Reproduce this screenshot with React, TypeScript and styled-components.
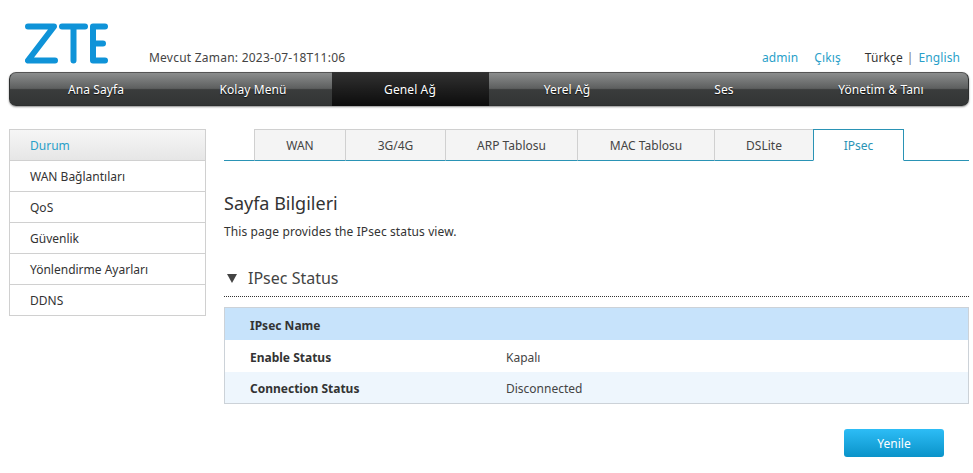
import React from "react";
import styled, { createGlobalStyle } from "styled-components";

const GlobalStyle = createGlobalStyle`
  html, body {
    margin: 0;
    padding: 0;
    background: #fff;
  }
  body {
    font-family: "Noto Sans", "Open Sans", sans-serif;
    font-size: 12px;
    color: #333;
  }
`;

const Page = styled.div`
  width: 973px;
  height: 473px;
  overflow: hidden;
  padding: 0 4px 0 9px;
  box-sizing: border-box;
`;

const Header = styled.header`
  height: 72px;
  display: flex;
  align-items: flex-end;
  padding: 0 9px 0 16px;
`;

const Logo = styled.svg`
  width: 84px;
  height: 41px;
  margin-bottom: 8px;
  flex: none;
`;

const Clock = styled.div`
  margin-left: 40px;
  padding-bottom: 6px;
  font-size: 12px;
  line-height: 17px;
  letter-spacing: 0.23px;
  color: #444;
`;

const UserLinks = styled.div`
  margin-left: auto;
  padding-bottom: 6px;
  display: flex;
  font-size: 12px;
  line-height: 17px;
  letter-spacing: 0.1px;
`;

const UserLink = styled.a`
  color: #2a9fc9;
  margin-left: ${(p: { $gap?: number }) => p.$gap ?? 0}px;
`;

const Lang = styled.span`
  color: #333;
  margin-left: 24px;
`;

const Sep = styled.span`
  color: #777;
  margin: 0 5px 0 4px;
`;

const NavBar = styled.nav`
  height: 34px;
  box-sizing: border-box;
  display: flex;
  padding: 0 9px 0 7.5px;
  border-radius: 7px;
  border: 1px solid #2d2f2f;
  border-top-color: #555;
  background: linear-gradient(#8b8d8d 0%, #5d5f5f 48%, #3a3c3c 52%, #323434 100%);
  box-shadow: 0 1px 2px rgba(0, 0, 0, 0.45);
`;

const NavItem = styled.div<{ $active?: boolean }>`
  width: 157px;
  flex: none;
  display: flex;
  align-items: center;
  justify-content: center;
  margin-top: -1px;
  margin-bottom: -1px;
  font-size: 12px;
  letter-spacing: 0.1px;
  color: #fff;
  text-shadow: 0 1px 1px rgba(0, 0, 0, 0.7);
  background: ${(p) =>
    p.$active ? "linear-gradient(#323232 0%, #1e1e1e 50%, #0c0c0c 100%)" : "none"};
`;

const Body = styled.div`
  display: flex;
  margin-top: 23px;
`;

const Sidebar = styled.aside`
  width: 197px;
  flex: none;
  align-self: flex-start;
  box-sizing: border-box;
  border: 1px solid #d0d0d0;
`;

const SideItem = styled.div<{ $active?: boolean }>`
  height: 31px;
  box-sizing: border-box;
  display: flex;
  align-items: center;
  padding-left: 20px;
  font-size: 12px;
  color: ${(p) => (p.$active ? "#2a9fc9" : "#333")};
  background: ${(p) => (p.$active ? "linear-gradient(#f6f6f6, #e6e6e6)" : "#fff")};
  border-bottom: 1px solid #d0d0d0;
  &:last-child {
    height: 30px;
    border-bottom: 0;
  }
`;

const Main = styled.main`
  width: 745px;
  margin-left: 18px;
`;

const Tabs = styled.div`
  height: 32px;
  box-sizing: border-box;
  display: flex;
  padding-left: 30px;
  border-bottom: 1px solid #2a93b5;
`;

const Tab = styled.div<{ $w: number; $active?: boolean }>`
  width: ${(p) => p.$w}px;
  height: 32px;
  flex: none;
  box-sizing: border-box;
  display: flex;
  align-items: center;
  justify-content: center;
  font-size: 12px;
  color: ${(p) => (p.$active ? "#2a93b5" : "#444")};
  background: ${(p) => (p.$active ? "#fff" : "#f4f4f4")};
  border: 1px solid ${(p) => (p.$active ? "#2a93b5" : "#d0d0d0")};
  border-right-width: ${(p) => (p.$active ? 1 : 0)}px;
  border-bottom: ${(p) => (p.$active ? "1px solid #fff" : "1px solid #2a93b5")};
`;

const Title = styled.h1`
  margin: 30px 0 0;
  font-size: 18px;
  font-weight: 400;
  line-height: 24px;
  color: #333;
`;

const Desc = styled.p`
  margin: 8px 0 0;
  font-size: 12px;
  line-height: 17px;
  letter-spacing: 0.1px;
  color: #333;
`;

const SectionHead = styled.div`
  margin-top: 25px;
  height: 32px;
  box-sizing: border-box;
  display: flex;
  align-items: center;
  padding-bottom: 5px;
  border-bottom: 1px dotted #333;
  font-size: 16px;
  color: #444;
`;

const Caret = styled.span`
  width: 0;
  height: 0;
  margin: 0 11px 0 3px;
  border-left: 5px solid transparent;
  border-right: 5px solid transparent;
  border-top: 9px solid #444;
`;

const Table = styled.div`
  margin-top: 10px;
  border: 1px solid #ccd2d8;
`;

const Row = styled.div<{ $bg: string }>`
  height: 32px;
  box-sizing: border-box;
  padding-top: 2px;
  display: flex;
  align-items: center;
  background: ${(p) => p.$bg};
  &:last-child {
    height: 31px;
  }
`;

const Label = styled.div`
  width: 281px;
  padding-left: 25px;
  box-sizing: border-box;
  font-size: 12px;
  font-weight: 700;
  color: #333;
`;

const Value = styled.div`
  font-size: 12px;
  color: #444;
`;

const Actions = styled.div`
  display: flex;
  justify-content: flex-end;
  margin-top: 25px;
  padding-right: 25px;
`;

const RefreshButton = styled.button`
  width: 100px;
  height: 28px;
  border: 0;
  border-radius: 3px;
  background: linear-gradient(#2dbdf6, #0a93c9);
  color: #fff;
  font-family: inherit;
  font-size: 12px;
  padding: 0;
`;

const navItems = ["Ana Sayfa", "Kolay Menü", "Genel Ağ", "Yerel Ağ", "Ses", "Yönetim & Tanı"];
const sideItems = ["Durum", "WAN Bağlantıları", "QoS", "Güvenlik", "Yönlendirme Ayarları", "DDNS"];
const tabs = [
  { label: "WAN", w: 91 },
  { label: "3G/4G", w: 100 },
  { label: "ARP Tablosu", w: 132 },
  { label: "MAC Tablosu", w: 137 },
  { label: "DSLite", w: 99 },
  { label: "IPsec", w: 91, active: true },
];

export default function App() {
  return (
    <Page>
      <GlobalStyle />
      <Header>
        <Logo viewBox="0 0 84 41">
          <g fill="none" stroke="#0f93d8" strokeWidth="6" strokeLinejoin="round" strokeLinecap="round">
            <path d="M3 3.5H29L3 37.5H30" />
            <path d="M37 3.5H60M48.5 3.5V37.5" />
            <path d="M80 3.5H68V37.5H80M68 20.5H78" />
          </g>
        </Logo>
        <Clock>Mevcut Zaman: 2023-07-18T11:06</Clock>
        <UserLinks>
          <UserLink>admin</UserLink>
          <UserLink $gap={16}>Çıkış</UserLink>
          <Lang>Türkçe</Lang>
          <Sep>|</Sep>
          <UserLink>English</UserLink>
        </UserLinks>
      </Header>
      <NavBar>
        {navItems.map((n) => (
          <NavItem key={n} $active={n === "Genel Ağ"}>
            {n}
          </NavItem>
        ))}
      </NavBar>
      <Body>
        <Sidebar>
          {sideItems.map((s, i) => (
            <SideItem key={s} $active={i === 0}>
              {s}
            </SideItem>
          ))}
        </Sidebar>
        <Main>
          <Tabs>
            {tabs.map((t) => (
              <Tab key={t.label} $w={t.w} $active={t.active}>
                {t.label}
              </Tab>
            ))}
          </Tabs>
          <Title>Sayfa Bilgileri</Title>
          <Desc>This page provides the IPsec status view.</Desc>
          <SectionHead>
            <Caret />
            IPsec Status
          </SectionHead>
          <Table>
            <Row $bg="#c7e3fb">
              <Label>IPsec Name</Label>
            </Row>
            <Row $bg="#fff">
              <Label>Enable Status</Label>
              <Value>Kapalı</Value>
            </Row>
            <Row $bg="#eef6fd">
              <Label>Connection Status</Label>
              <Value>Disconnected</Value>
            </Row>
          </Table>
          <Actions>
            <RefreshButton>Yenile</RefreshButton>
          </Actions>
        </Main>
      </Body>
    </Page>
  );
}
